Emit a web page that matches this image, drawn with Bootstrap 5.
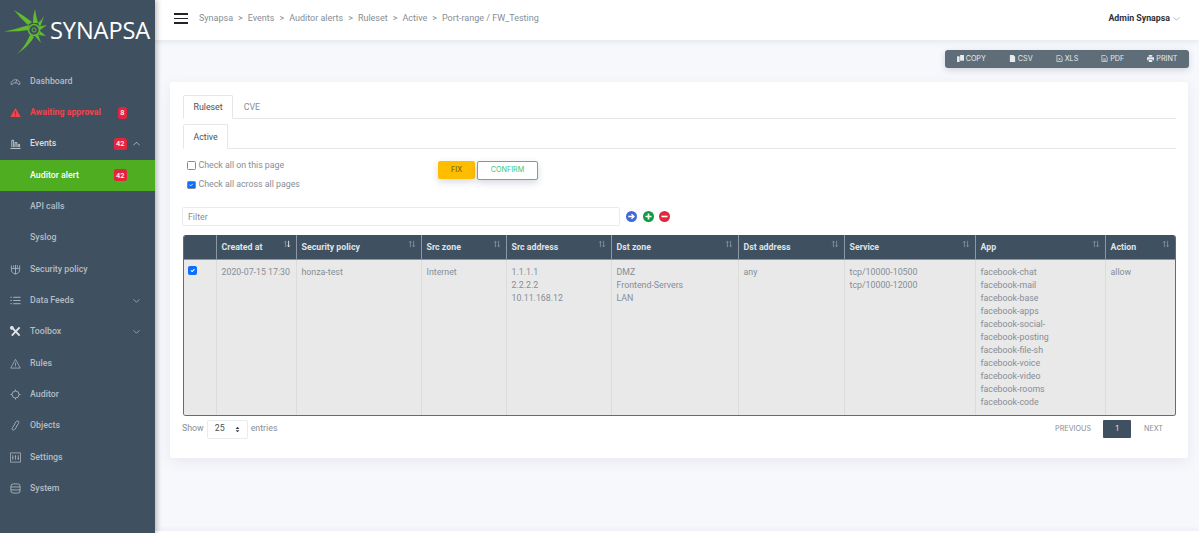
<!DOCTYPE html>
<html lang="en">
<head>
  <meta charset="UTF-8">
  <title>Synapsa</title>
  <link href="https://cdn.jsdelivr.net/npm/bootstrap@5.3.3/dist/css/bootstrap.min.css" rel="stylesheet">
  <style>
    html, body { height: 100%; }
    body { font-family: Roboto, "Liberation Sans", sans-serif; font-size: 8.8px; color: #868e96; background: #f7f8fc; overflow: hidden; }
    .app-shell { height: 533px; }
    .side { width: 155px; flex: none; background: #3f5060; box-shadow: 2px 0 5px rgba(0,0,0,.25); z-index: 3; }
    .logo-box { height: 65.5px; padding: 9px 0 0 3px; }
    .logo-word { font-family: "Open Sans", sans-serif; font-size: 23.6px; color: #fff; line-height: 1; margin-left: -1px; margin-top: 10px; letter-spacing: -.1px; }
    .side-link { height: 31.35px; padding: 0 0 0 10px; color: #b4bcc4; font-weight: 500; font-size: 8.8px; gap: 9px; }
    .side-link svg.ico { width: 11px; height: 11px; flex: none; }
    .side-link.danger { color: #f4434c; font-weight: 700; }
    .side-link.open { color: #d8dde1; }
    .side-link.current { background: #4fad21; color: #fff; }
    .side-link.sub { padding-left: 30px; }
    .side-link .badge { background: #e3243f; font-size: 7.4px; font-weight: 500; padding: 2.5px 2.5px; border-radius: 2.5px; line-height: 7px; }
    .chev { width: 7px; height: 7px; flex: none; margin-left: -3px; margin-right: 15px; }
    .chev.ms-auto { margin-left: auto; }
    .chev-space { margin-right: 28px; }
    .top-bar { height: 40px; background: #fff; box-shadow: 0 1px 6px rgba(60,70,110,.12); padding: 0 19px 3px 174px; margin-left: -155px; }
    .burger { width: 14px; gap: 2.6px; margin-right: 11px; }
    .burger span { display: block; height: 1.8px; background: #212529; }
    .crumbs { --bs-breadcrumb-divider: '>'; --bs-breadcrumb-margin-bottom: 0; --bs-breadcrumb-item-padding-x: 5px; font-size: 9px; }
    .crumbs .breadcrumb-item { color: #868e96; }
    .crumbs .breadcrumb-item::before { color: #868e96; }
    .who { color: #2c3238; font-weight: 700; font-size: 8.8px; }
    .who svg { width: 7px; height: 7px; margin-left: 3px; }
    .tool-row { padding: 10px 10px 0 0; height: 42px; }
    .tool-group { background: #5f6d78; border-radius: 3px; height: 18px; padding: 0 0; box-shadow: 0 2px 6px rgba(60,70,110,.2); }
    .tool-btn { font-family: Inter, sans-serif; font-size: 7.2px; color: #e8ebee; padding: 0 11.5px; gap: 2px; }
    .tool-btn svg { width: 7px; height: 7px; }
    .panel { margin: 0 11px 0 15px; height: 376px; background: #fff; border-radius: 2px; box-shadow: 0 4px 14px rgba(60,70,110,.08); padding: 13px 12px 0 13px; }
    .tabs-a { --bs-nav-tabs-border-color: #e4e6ea; --bs-nav-tabs-border-radius: 2px; --bs-nav-tabs-link-active-color: #495057; --bs-nav-tabs-link-active-border-color: #e4e6ea #e4e6ea #fff; --bs-nav-link-color: #868e96; --bs-nav-link-font-size: 8.8px; --bs-nav-link-padding-x: 9.5px; --bs-nav-link-padding-y: 0; }
    .tabs-a .nav-link { height: 24px; line-height: 22px; }
    .tabs-b { margin-top: 5px; }
    .tabs-b .nav-link { height: 25px; line-height: 24px; }
    .check-wrap { width: 255px; padding: 6.5px 0 0 4px; }
    .check-line { height: 19.5px; gap: 3px; }
    .check-line .form-check-input { width: 8.5px; height: 8.5px; margin: 0; border-radius: 1.5px; border-color: #888; flex: none; }
    .fix-btn { width: 37px; height: 18px; font-family: Inter, sans-serif; font-size: 7.2px; padding: 0; background: #ffbd00; border: 0; color: #6d5410; border-radius: 2px; box-shadow: 0 3px 7px rgba(60,70,110,.2); }
    .conf-btn { width: 61px; height: 19px; margin-left: 2px; font-family: Inter, sans-serif; font-size: 7.2px; padding: 0; background: #fff; border: 1px solid #3ac47d; color: #3ac47d; border-radius: 2px; box-shadow: 0 3px 7px rgba(60,70,110,.2); }
    .filter-input { width: 438px; height: 19.5px; font-size: 8.8px; padding: 0 5px; border: 1px solid #e9ecef; border-radius: 2px; color: #868e96; }
    .filter-input::placeholder { color: #868e96; }
    .round-ico { width: 11px; height: 11px; }
    .filter-row { margin-left: -1px; margin-top: 12px; gap: 5.3px; height: 20px; }
    .filter-row .filter-input { margin-right: 1px; }
    .grid-wrap { width: 993px; margin-top: 8.5px; border: 1px solid #5f6d78; border-top: 0; border-radius: 3px; overflow: hidden; }
    .alert-grid { table-layout: fixed; width: 991px; margin: 0; font-size: 8.8px; --bs-table-bg: #e9e9e9; --bs-table-color: #868e96; }
    .cw-1 { width: 32px; } .cw-2 { width: 80px; } .cw-3 { width: 125px; } .cw-4 { width: 85px; } .cw-5 { width: 105px; }
    .cw-6 { width: 127px; } .cw-7 { width: 106px; } .cw-8 { width: 131px; } .cw-9 { width: 130px; }
    .alert-grid th { background: #3f5060; color: #dfe3e7; font-weight: 700; height: 24px; padding: 2px 0 0 5px; vertical-align: middle; border: 0; border-right: 1px solid #8b98a3; border-bottom: 1px solid #8b98a3; position: relative; }
    .alert-grid th:last-child, .alert-grid td:last-child { border-right: 0; }
    .alert-grid td { padding: 6px 5px 0; height: 156px; line-height: 13.1px; vertical-align: top; border: 0; border-right: 1px solid #dcdcdc; }
    .alert-grid td:first-child { padding-left: 4px; }
    .alert-grid td .form-check-input { width: 9px; height: 9px; margin: 0; border-radius: 1.5px; display: block; }
    .sort-ico { position: absolute; top: 5px; right: 5px; width: 8px; height: 8px; }
    .pager-row { padding-top: 0; height: 26px; margin-left: -1px; }
    .len-select { width: 41px; height: 19px; font-size: 8.8px; color: #495057; padding: 0 0 0 7px; border: 1px solid #e9ecef; border-radius: 2px; margin: 0 3px; background-image: url("data:image/svg+xml,%3csvg xmlns='http://www.w3.org/2000/svg' viewBox='0 0 8 10'%3e%3cpath d='M4 0.5L7 4H1ZM4 9.5L1 6H7Z' fill='%23343a40'/%3e%3c/svg%3e"); background-position: right 7px center; background-size: 5px 7px; }
    .page-txt { font-family: Inter, sans-serif; font-size: 7.2px; color: #868e96; }
    .page-cur { width: 28px; height: 18px; margin: 0 13px 0 12px; background: #3f5060; color: #dfe3e7; border-radius: 1px; font-family: Inter, sans-serif; font-size: 7.4px; }
    .next-txt { margin-right: 13px; }
    .foot-line { position: absolute; left: 155px; right: 0; bottom: 0; height: 2px; background: #fff; box-shadow: 0 -1px 4px rgba(60,70,110,.1); }
  </style>
</head>
<body>
<div class="app-shell d-flex position-relative">
  <aside class="side d-flex flex-column">
    <div class="logo-box d-flex">
      <svg width="48" height="50" viewBox="0 0 48 50" class="flex-shrink-0">
        <g fill="#62bb2e">
          <path d="M1 22.5 Q14 20 26 16 L25 21 Q14 23 1 22.5Z"/>
          <path d="M11 1 Q20 6 29 13 L25 16 Q18 10 11 1Z"/>
          <path d="M32 0 Q33 7 35 14 L30 14 Q30 6 32 0Z"/>
          <path d="M41 7 Q39 11 35 14 L37 18 Q39 13 41 7Z"/>
          <path d="M44 16 L36 17.5 L37 21Z"/>
          <path d="M43 27 L37 22 L36 26Z"/>
          <path d="M38 34 L35 25 L32 27Z"/>
          <path d="M14 45 Q22 38 27 26 L31 28 Q26 37 14 45Z"/>
        </g>
        <circle cx="31" cy="21" r="5.5" fill="#3f5060" stroke="#62bb2e" stroke-width="1.6"/>
        <circle cx="31" cy="21" r="2" fill="none" stroke="#62bb2e" stroke-width=".9"/>
      </svg>
      <div class="logo-word">SYNAPSA</div>
    </div>
    <nav class="nav flex-column flex-nowrap">
      <a class="side-link d-flex align-items-center text-decoration-none" href="#">
        <svg class="ico" viewBox="0 0 12 12" fill="none" stroke="currentColor" stroke-width=".8"><path d="M1 9 A5 5 0 1 1 11 9 L9 9 L8 7.5 L4 7.5 L3 9Z"/><path d="M6 7.5 L7.5 4"/></svg>Dashboard</a>
      <a class="side-link danger d-flex align-items-center text-decoration-none" href="#">
        <svg class="ico" viewBox="0 0 12 12"><path d="M6 1 L11.7 11 L.3 11Z" fill="#f4434c"/><path d="M6 4.5V8M6 9V10" stroke="#3f5060" stroke-width="1.1"/></svg>Awaiting approval<span class="badge ms-auto chev-space">8</span></a>
      <a class="side-link open d-flex align-items-center text-decoration-none" href="#">
        <svg class="ico" viewBox="0 0 12 12" fill="none" stroke="currentColor" stroke-width=".9"><path d="M.5 11.5H11.5M2 10V2.5H4V10M5.5 10V5H7.5V10M9 10V7H10.5V10"/></svg>Events<span class="badge ms-auto">42</span>
        <svg class="chev" viewBox="0 0 8 8" fill="none" stroke="currentColor" stroke-width=".8"><path d="M.5 6 L4 2.5 L7.5 6"/></svg></a>
      <a class="side-link sub current d-flex align-items-center text-decoration-none" href="#">Auditor alert<span class="badge ms-auto chev-space">42</span></a>
      <a class="side-link sub d-flex align-items-center text-decoration-none" href="#">API calls</a>
      <a class="side-link sub d-flex align-items-center text-decoration-none" href="#">Syslog</a>
      <a class="side-link d-flex align-items-center text-decoration-none" href="#">
        <svg class="ico" viewBox="0 0 12 12" fill="none" stroke="currentColor" stroke-width=".9"><path d="M1.5 1.5V6 Q1.5 10 6 11 Q10.5 10 10.5 6V1.5M6 1V11M1.5 5H10.5M4 1.5V4M8 1.5V4"/></svg>Security policy</a>
      <a class="side-link d-flex align-items-center text-decoration-none" href="#">
        <svg class="ico" viewBox="0 0 12 12" fill="none" stroke="currentColor" stroke-width="1"><path d="M3.5 2.5H11.5M3.5 6H11.5M3.5 9.5H11.5M.5 2.5H2M.5 6H2M.5 9.5H2"/></svg>Data Feeds
        <svg class="chev ms-auto" viewBox="0 0 8 8" fill="none" stroke="currentColor" stroke-width=".8"><path d="M.5 2.5 L4 6 L7.5 2.5"/></svg></a>
      <a class="side-link d-flex align-items-center text-decoration-none" href="#">
        <svg class="ico" viewBox="0 0 12 12" fill="none" stroke="#dfe3e7" stroke-width="2.1"><path d="M2 1.5 L10.5 10.5M10.5 1.5 L2 10.5"/><circle cx="2" cy="2" r="1"/></svg>Toolbox
        <svg class="chev ms-auto" viewBox="0 0 8 8" fill="none" stroke="currentColor" stroke-width=".8"><path d="M.5 2.5 L4 6 L7.5 2.5"/></svg></a>
      <a class="side-link d-flex align-items-center text-decoration-none" href="#">
        <svg class="ico" viewBox="0 0 12 12" fill="none" stroke="currentColor" stroke-width=".8"><path d="M6 1.5 L11.2 11 L.8 11Z M6 5V8.5M6 9.3V10"/></svg>Rules</a>
      <a class="side-link d-flex align-items-center text-decoration-none" href="#">
        <svg class="ico" viewBox="0 0 12 12" fill="none" stroke="currentColor" stroke-width=".9"><circle cx="6" cy="6" r="3.8"/><path d="M6 .5V2.2M6 9.8V11.5M.5 6H2.2M9.8 6H11.5"/></svg>Auditor</a>
      <a class="side-link d-flex align-items-center text-decoration-none" href="#">
        <svg class="ico" viewBox="0 0 12 12" fill="none" stroke="currentColor" stroke-width=".9"><path d="M5 4 L7 1.5 Q8.5 .5 9.5 1.5 Q10 2.5 9 4 L6.5 8 M7 8 L5 10.5 Q3.5 11.5 2.5 10.5 Q2 9.5 3 8 L5.5 4"/></svg>Objects</a>
      <a class="side-link d-flex align-items-center text-decoration-none" href="#">
        <svg class="ico" viewBox="0 0 12 12" fill="none" stroke="currentColor" stroke-width=".8"><rect x=".7" y="1" width="10.6" height="10"/><path d="M3 3.5V8.5M6 3.5V8.5M9 3.5V8.5M2.2 6H3.8M5.2 4.8H6.8M8.2 7H9.8"/></svg>Settings</a>
      <a class="side-link d-flex align-items-center text-decoration-none" href="#">
        <svg class="ico" viewBox="0 0 12 12" fill="none" stroke="currentColor" stroke-width=".9"><rect x="1" y="1" width="10" height="10" rx="2.5"/><path d="M1 4.3H11M1 7.6H11"/></svg>System</a>
    </nav>
  </aside>

  <main class="flex-grow-1 d-flex flex-column">
    <header class="top-bar d-flex align-items-center position-relative">
      <div class="burger d-flex flex-column"><span></span><span></span><span></span></div>
      <ol class="breadcrumb crumbs">
        <li class="breadcrumb-item">Synapsa</li>
        <li class="breadcrumb-item">Events</li>
        <li class="breadcrumb-item">Auditor alerts</li>
        <li class="breadcrumb-item">Ruleset</li>
        <li class="breadcrumb-item">Active</li>
        <li class="breadcrumb-item">Port-range / FW_Testing</li>
      </ol>
      <div class="who ms-auto d-flex align-items-center">Admin Synapsa
        <svg viewBox="0 0 8 8" fill="none" stroke="#868e96" stroke-width=".7"><path d="M.5 2.5 L4 6 L7.5 2.5"/></svg></div>
    </header>

    <div class="tool-row d-flex justify-content-end">
      <div class="tool-group d-flex align-items-center">
        <span class="tool-btn d-flex align-items-center"><svg viewBox="0 0 8 8" fill="#e8ebee"><path d="M0 1.5H3V8H0Z"/><path d="M3.5 0H8V6.5H3.5Z"/></svg>COPY</span>
        <span class="tool-btn d-flex align-items-center"><svg viewBox="0 0 8 8" fill="#e8ebee"><path d="M1 0H5L7 2V8H1Z"/></svg>CSV</span>
        <span class="tool-btn d-flex align-items-center"><svg viewBox="0 0 8 8" fill="none" stroke="#e8ebee" stroke-width=".8"><path d="M1 .5H5L7 2.5V7.5H1Z M3 3.5L5 6M5 3.5L3 6"/></svg>XLS</span>
        <span class="tool-btn d-flex align-items-center"><svg viewBox="0 0 8 8" fill="none" stroke="#e8ebee" stroke-width=".8"><path d="M1 .5H5L7 2.5V7.5H1Z M2.5 4.5H5.5M2.5 6H5.5"/></svg>PDF</span>
        <span class="tool-btn d-flex align-items-center"><svg viewBox="0 0 8 8" fill="#e8ebee"><path d="M2 0H6V2H2Z M0 2.6H8V6H6.5V4.8H1.5V6H0Z M2 5.4H6V8H2Z"/></svg>PRINT</span>
      </div>
    </div>

    <section class="panel">
      <ul class="nav nav-tabs tabs-a">
        <li class="nav-item"><a class="nav-link active" href="#">Ruleset</a></li>
        <li class="nav-item"><a class="nav-link" href="#">CVE</a></li>
      </ul>
      <ul class="nav nav-tabs tabs-a tabs-b">
        <li class="nav-item"><a class="nav-link active" href="#">Active</a></li>
      </ul>
      <div class="d-flex">
        <div class="check-wrap">
          <label class="check-line d-flex align-items-center"><input class="form-check-input" type="checkbox">Check all on this page</label>
          <label class="check-line d-flex align-items-center"><input class="form-check-input" type="checkbox" checked>Check all across all pages</label>
        </div>
        <div class="d-flex align-items-start pt-2 mt-1">
          <button class="btn fix-btn" type="button">FIX</button>
          <button class="btn conf-btn" type="button">CONFIRM</button>
        </div>
      </div>
      <div class="filter-row d-flex align-items-center">
        <input class="form-control filter-input" type="text" placeholder="Filter">
        <svg class="round-ico" viewBox="0 0 12 12"><circle cx="6" cy="6" r="6" fill="#3f6ad8"/><path d="M2.5 6H8M6 3.5L8.7 6L6 8.5" fill="none" stroke="#fff" stroke-width="1.5"/></svg>
        <svg class="round-ico" viewBox="0 0 12 12"><circle cx="6" cy="6" r="6" fill="#0c9c41"/><path d="M6 2.7V9.3M2.7 6H9.3" stroke="#fff" stroke-width="1.8"/></svg>
        <svg class="round-ico" viewBox="0 0 12 12"><circle cx="6" cy="6" r="6" fill="#e3243f"/><path d="M2.7 6H9.3" stroke="#fff" stroke-width="1.8"/></svg>
      </div>
      <div class="grid-wrap">
        <table class="table alert-grid">
          <colgroup>
            <col class="cw-1"><col class="cw-2"><col class="cw-3"><col class="cw-4"><col class="cw-5"><col class="cw-6"><col class="cw-7"><col class="cw-8"><col class="cw-9"><col>
          </colgroup>
          <thead>
            <tr id="headRow"><th></th></tr>
          </thead>
          <tbody>
            <tr>
              <td><input class="form-check-input" type="checkbox" checked></td>
              <td>2020-07-15 17:30</td>
              <td>honza-test</td>
              <td>Internet</td>
              <td>1.1.1.1<br>2.2.2.2<br>10.11.168.12</td>
              <td>DMZ<br>Frontend-Servers<br>LAN</td>
              <td>any</td>
              <td>tcp/10000-10500<br>tcp/10000-12000</td>
              <td>facebook-chat<br>facebook-mail<br>facebook-base<br>facebook-apps<br>facebook-social-<br>facebook-posting<br>facebook-file-sh<br>facebook-voice<br>facebook-video<br>facebook-rooms<br>facebook-code</td>
              <td>allow</td>
            </tr>
          </tbody>
        </table>
      </div>
      <div class="pager-row d-flex align-items-center">
        <span>Show</span>
        <select class="form-select len-select"><option>25</option></select>
        <span>entries</span>
        <div class="ms-auto d-flex align-items-center">
          <span class="page-txt">PREVIOUS</span>
          <span class="page-cur d-flex align-items-center justify-content-center">1</span>
          <span class="page-txt next-txt">NEXT</span>
        </div>
      </div>
    </section>
  </main>
  <div class="foot-line"></div>
</div>
<script>
  var heads = ["Created at", "Security policy", "Src zone", "Src address", "Dst zone", "Dst address", "Service", "App", "Action"];
  var row = document.getElementById("headRow");
  heads.forEach(function (h, i) {
    var th = document.createElement("th");
    var a = i === 0 ? "#fff" : "#8d9aa5";
    th.innerHTML = h + '<svg class="sort-ico" viewBox="0 0 10 10" fill="none" stroke-width="1"><path d="M3 9V1.5M1.3 3.2L3 1.5L4.7 3.2" stroke="#8d9aa5"/><path d="M7 1V8.5M5.3 6.8L7 8.5L8.7 6.8" stroke="' + a + '"/></svg>';
    row.appendChild(th);
  });
</script>
</body>
</html>
